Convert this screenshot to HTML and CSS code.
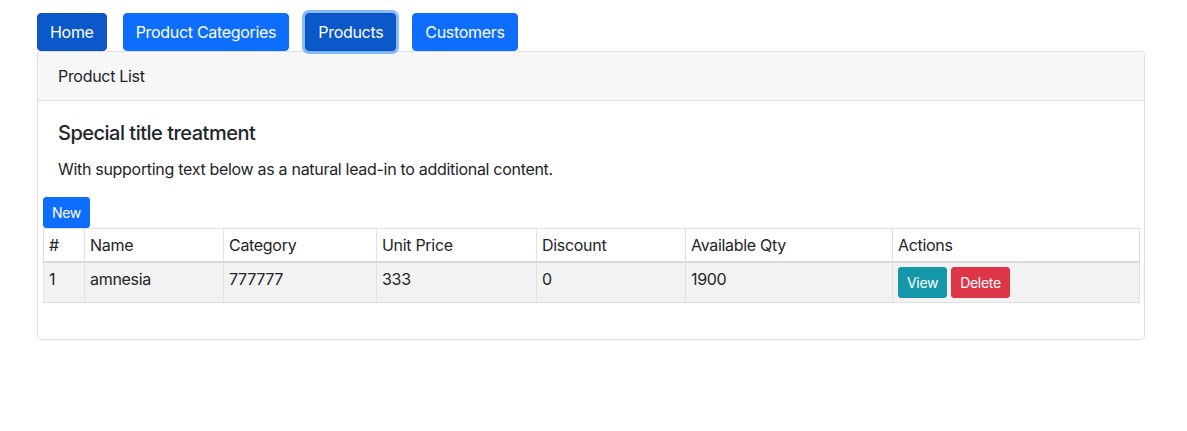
FILE: index.html
```html
<!DOCTYPE html>
<html>
<head>
<meta charset="utf-8">
<link rel="stylesheet" href="styles.css">
</head>
<body>
<div class="wrap">
  <nav class="nav">
    <button class="btn btn-primary active">Home</button>
    <button class="btn btn-primary">Product Categories</button>
    <button class="btn btn-primary active focus">Products</button>
    <button class="btn btn-primary">Customers</button>
  </nav>
  <div class="card">
    <div class="card-header">Product List</div>
    <div class="card-body">
      <h5 class="card-title">Special title treatment</h5>
      <p class="card-text">With supporting text below as a natural lead-in to additional content.</p>
    </div>
    <div class="list">
      <button class="btn btn-sm btn-primary">New</button>
      <table class="table">
        <colgroup>
          <col class="c1"><col class="c2"><col class="c3"><col class="c4"><col class="c5"><col class="c6"><col class="c7">
        </colgroup>
        <thead>
          <tr><th>#</th><th>Name</th><th>Category</th><th>Unit Price</th><th>Discount</th><th>Available Qty</th><th>Actions</th></tr>
        </thead>
        <tbody>
          <tr>
            <td>1</td><td>amnesia</td><td>777777</td><td>333</td><td>0</td><td>1900</td>
            <td><div class="actions"><button class="btn btn-sm btn-info">View</button><button class="btn btn-sm btn-danger">Delete</button></div></td>
          </tr>
        </tbody>
      </table>
    </div>
  </div>
</div>
</body>
</html>
```
FILE: styles.css
```css
* { box-sizing: border-box; }
body {
  margin: 8px;
  font-family: Inter, "Noto Sans", "Liberation Sans", sans-serif;
  font-size: 16px;
  line-height: 1.5;
  letter-spacing: -0.019em;
  color: #212529;
  background: #fff;
}
.wrap {
  margin-left: 29px;
  width: 1108px;
}
.nav {
  display: flex;
  gap: 16px;
  padding-top: 5px;
}
.btn {
  font-family: inherit;
  font-size: 16px;
  line-height: 24px;
  letter-spacing: inherit;
  padding: 6px 12px;
  border: 1px solid transparent;
  border-radius: 4px;
  color: #fff;
  cursor: pointer;
}
.btn-primary { background: #0d6efd; border-color: #0d6efd; }
.btn-primary.active { background: #0a58ca; border-color: #0a53be; }
.btn-primary.focus { box-shadow: 0 0 0 3px rgba(70, 150, 253, 0.65); }
.btn-info { background: #1397a9; border-color: #1397a9; }
.btn-danger { background: #dc3545; border-color: #dc3545; }
.btn-sm {
  font-size: 14px;
  line-height: 21px;
  padding: 4px 8px;
  border-radius: 3px;
}
.card {
  border: 1px solid #dfdfdf;
  border-radius: 4px;
  background: #fff;
}
.card-header {
  background: #f7f7f7;
  border-bottom: 1px solid #dfdfdf;
  padding: 12px 20px;
  border-radius: 3px 3px 0 0;
}
.card-body {
  padding: 20px 20px 0;
}
.card-title {
  margin: 0 0 12px;
  font-size: 20px;
  font-weight: 500;
  line-height: 24px;
  letter-spacing: -0.025em;
}
.card-text {
  margin: 0 0 16px;
}
.list {
  padding: 0 5px 20px;
}
.list > .btn { display: block; }
.table {
  width: 100%;
  border-collapse: collapse;
  table-layout: fixed;
  margin-bottom: 16px;
}
.c1 { width: 41px; }
.c2 { width: 139px; }
.c3 { width: 153px; }
.c4 { width: 160px; }
.c5 { width: 149px; }
.c6 { width: 207px; }
.c7 { width: 247px; }
.table th, .table td {
  border: 1px solid #dee2e6;
  padding: 4px 5px;
  text-align: left;
  vertical-align: top;
  font-weight: 400;
}
.table thead th { border-bottom: 2px solid #d8dcdf; }
.table tbody tr { background: #f2f2f2; }
.actions {
  display: flex;
  gap: 4px;
}
```
